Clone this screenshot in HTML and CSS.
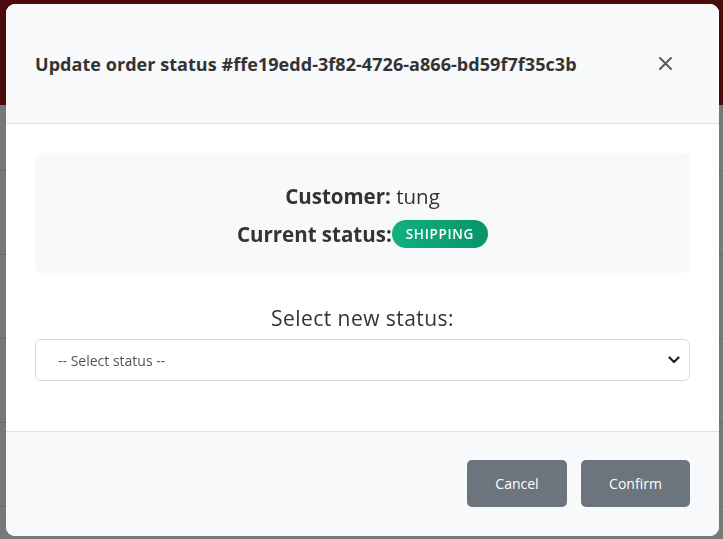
FILE: index.html
```html
<!DOCTYPE html>
<html lang="en">
<head>
<meta charset="utf-8">
<title>Update order status</title>
<link rel="stylesheet" href="styles.css">
</head>
<body>
<div class="page">
  <header class="page-header"></header>
  <div class="table">
    <div class="row"></div>
    <div class="row"></div>
    <div class="row"></div>
    <div class="row"></div>
    <div class="row"></div>
  </div>
</div>
<div class="overlay">
  <div class="modal" role="dialog" aria-modal="true">
    <div class="modal-header">
      <h5 class="modal-title">Update order status #ffe19edd-3f82-4726-a866-bd59f7f35c3b</h5>
      <button class="close" aria-label="Close">
        <svg width="13" height="13" viewBox="0 0 13 13"><path d="M1 1 L12 12 M12 1 L1 12" stroke="#555" stroke-width="1.8" stroke-linecap="round"/></svg>
      </button>
    </div>
    <div class="modal-body">
      <div class="info">
        <p class="line"><strong>Customer:</strong> tung</p>
        <p class="line"><strong>Current status:</strong><span class="badge">SHIPPING</span></p>
      </div>
      <label class="label" for="status">Select new status:</label>
      <div class="select">
        <span class="select-text">-- Select status --</span>
        <svg width="12" height="8" viewBox="0 0 12 8"><path d="M1.5 1.5 L6 6 L10.5 1.5" fill="none" stroke="#222" stroke-width="2.2" stroke-linecap="round" stroke-linejoin="round"/></svg>
      </div>
    </div>
    <div class="modal-footer">
      <button class="btn btn-cancel">Cancel</button>
      <button class="btn btn-confirm">Confirm</button>
    </div>
  </div>
</div>
</body>
</html>
```
FILE: styles.css
```css
* { box-sizing: border-box; }
html, body { margin: 0; padding: 0; }
body {
  width: 723px;
  height: 539px;
  overflow: hidden;
  font-family: "Open Sans", "Liberation Sans", sans-serif;
  color: #333;
  background: #fff;
}
.page-header { height: 105px; background: #9e1a1a; }
.row { height: 84px; border-bottom: 1px solid #dcdcdc; }
.row:first-child { height: 66px; }
.overlay {
  position: fixed;
  inset: 0;
  background: rgba(0, 0, 0, 0.53);
}
.modal {
  position: absolute;
  left: 6px;
  top: 4px;
  width: 713px;
  height: 532px;
  background: #fff;
  border-radius: 9px;
  overflow: hidden;
  display: flex;
  flex-direction: column;
}
.modal-header {
  height: 120px;
  flex: none;
  background: #f8f9fa;
  border-bottom: 1px solid #dee2e6;
  display: flex;
  align-items: center;
  justify-content: space-between;
  padding: 0 47px 0 29px;
}
.modal-title {
  margin: 0;
  font-size: 18px;
  font-weight: 700;
  color: #333;
  letter-spacing: 0.05px;
}
.close {
  border: 0;
  background: none;
  padding: 0;
  width: 13px;
  height: 13px;
  display: flex;
}
.modal-body {
  flex: 1;
  padding: 29px 29px 0;
  display: flex;
  flex-direction: column;
  align-items: stretch;
}
.info {
  height: 120px;
  background: #f8f9fa;
  border-radius: 6px;
  display: flex;
  flex-direction: column;
  align-items: center;
  justify-content: center;
  gap: 10px;
  padding-top: 4px;
}
.line {
  margin: 0;
  font-size: 20.5px;
  color: #333;
  display: flex;
  align-items: center;
  height: 28px;
  white-space: pre;
}
.line strong { font-weight: 700; }
.badge {
  display: inline-block;
  background: linear-gradient(90deg, #12b07e, #089468);
  color: #fff;
  font-size: 13.5px;
  font-weight: 600;
  letter-spacing: 0.7px;
  padding: 0 14px;
  height: 28px;
  line-height: 28px;
  border-radius: 14px;
}
.label {
  margin-top: 32px;
  text-align: center;
  font-size: 21px;
  line-height: 26px;
  letter-spacing: 0.45px;
  color: #333;
}
.select {
  margin-top: 8px;
  height: 42px;
  border: 1px solid #d9d9d9;
  border-radius: 6px;
  display: flex;
  align-items: center;
  justify-content: space-between;
  padding: 0 9px 0 22px;
  font-size: 14px;
  color: #555;
}
.modal-footer {
  height: 105px;
  flex: none;
  background: #f8f9fa;
  border-top: 1px solid #dee2e6;
  display: flex;
  align-items: center;
  justify-content: flex-end;
  gap: 14px;
  padding: 0 29px 1px;
}
.btn {
  height: 47px;
  border: 0;
  border-radius: 5px;
  background: #6c757d;
  color: #fff;
  font-family: inherit;
  font-size: 14px;
}
.btn-cancel { width: 100px; }
.btn-confirm { width: 109px; }
```
